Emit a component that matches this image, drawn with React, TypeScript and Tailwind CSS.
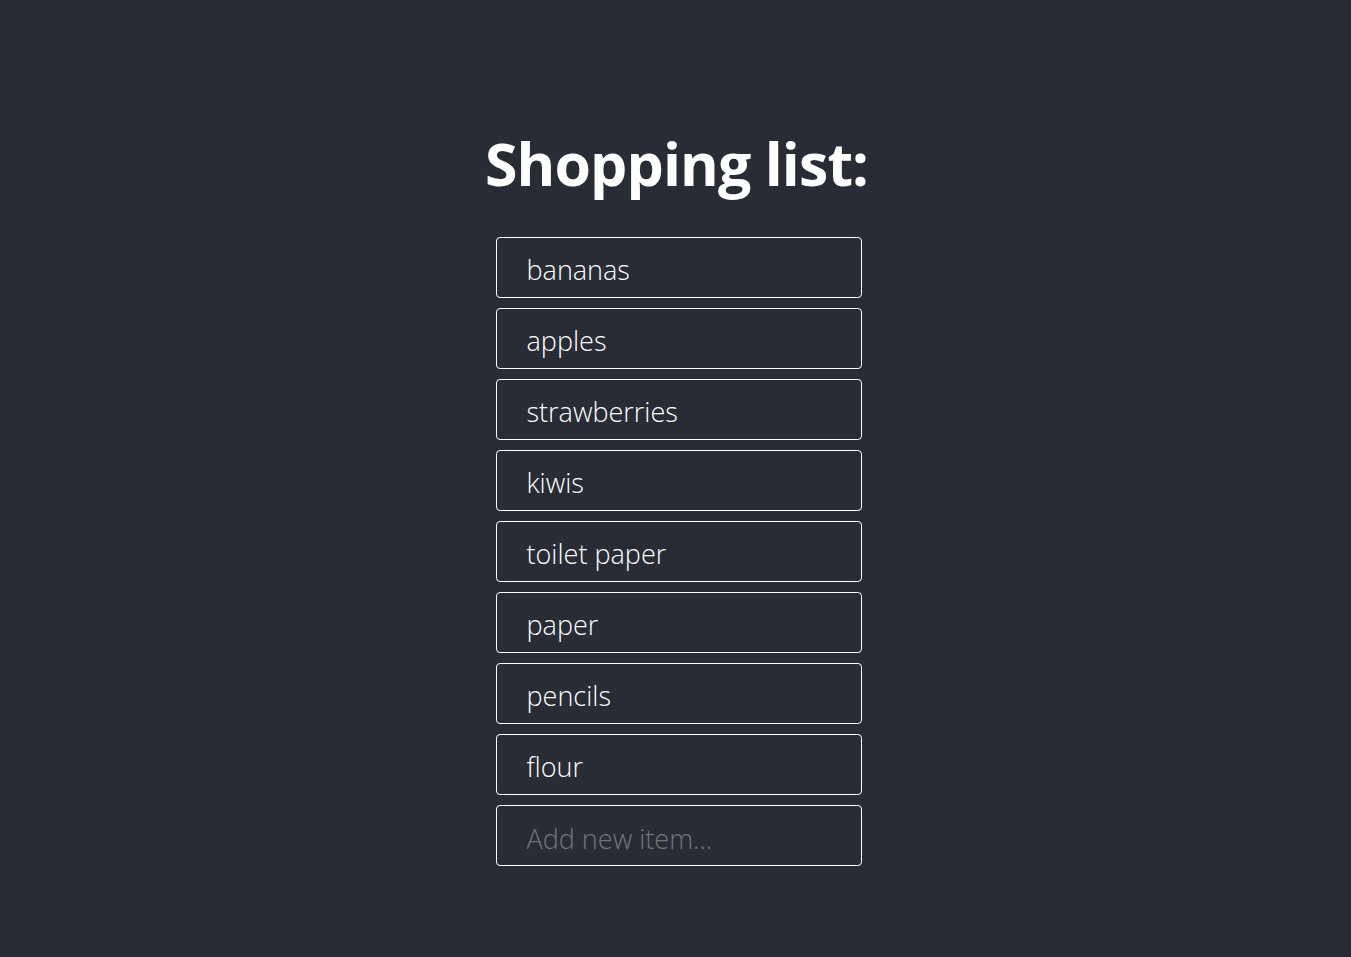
import React from 'react';

function App() {
  const items = ['bananas', 'apples', 'strawberries', 'kiwis', 'toilet paper', 'paper', 'pencils', 'flour'];

  return (
    <div
      className="min-h-screen w-full bg-[#282c34] text-white flex flex-col items-center pt-[123px]"
      style={{ fontFamily: '"Open Sans", "Noto Sans", sans-serif' }}
    >
      <h1 className="text-[59px] font-bold leading-[80px] tracking-[-0.9px] ml-[2px]">Shopping list:</h1>
      <div className="mt-[34px] ml-[6px] flex flex-col gap-[10px]">
        {items.map((item) => (
          <div
            key={item}
            className="w-[366px] h-[61px] border border-white rounded-[4px] pl-[30px] pt-[14px] text-[27px] font-light leading-[36px]"
          >
            {item}
          </div>
        ))}
        <input
          placeholder="Add new item..."
          className="w-[366px] h-[61px] border border-white rounded-[4px] pl-[30px] pt-[5px] text-[27px] font-light bg-transparent outline-none placeholder:text-[#757575]"
        />
      </div>
    </div>
  );
}

export default App;
